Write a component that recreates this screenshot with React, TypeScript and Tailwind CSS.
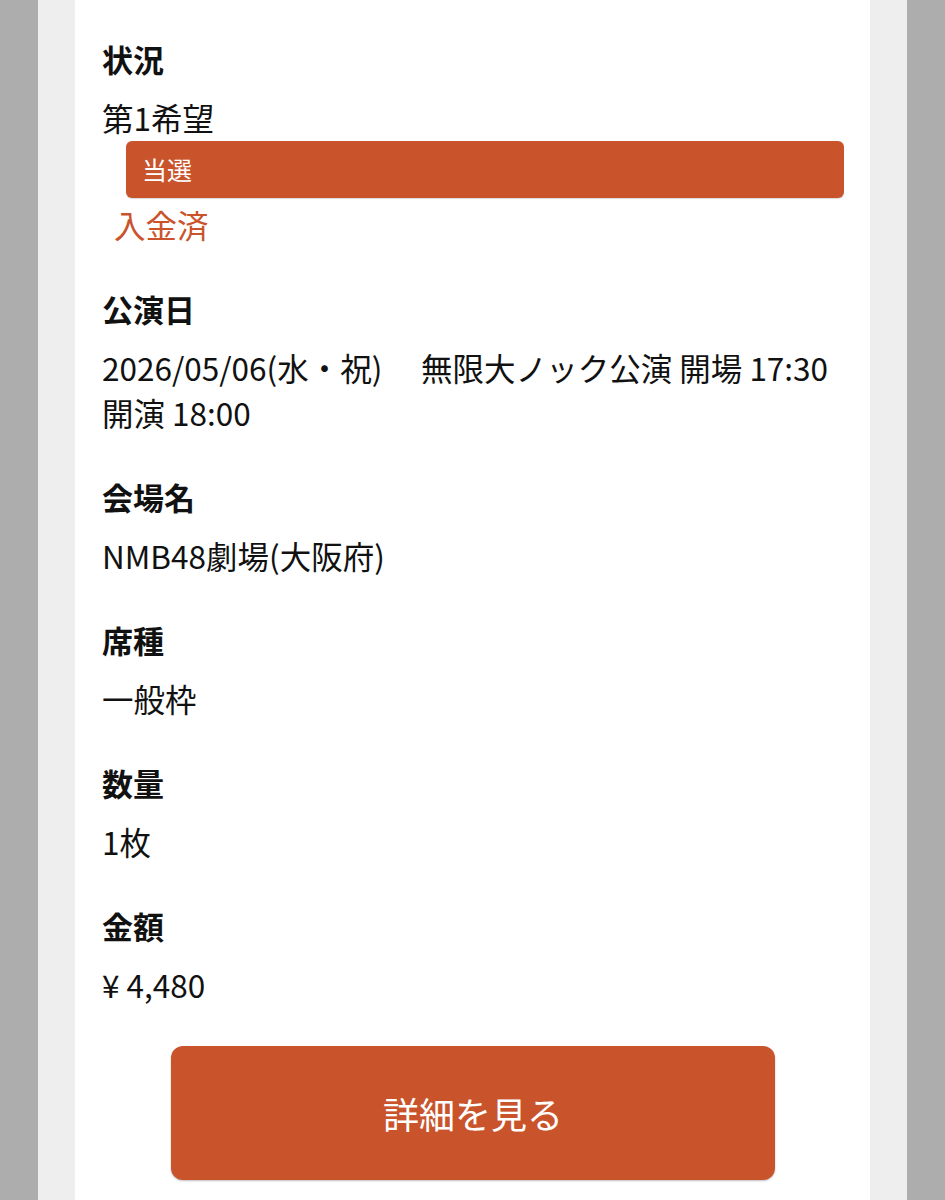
import React from "react";

const orange = "bg-[#c9542c]";

const Field = ({ label, children }: { label: string; children: React.ReactNode }) => (
  <div className="flex flex-col">
    <div className="text-[31px] leading-[45px] font-bold text-[#111]">{label}</div>
    <div className="mt-[14px] text-[31.5px] leading-[45px] text-[#111]">{children}</div>
  </div>
);

const App = () => {
  return (
    <div
      className="min-h-[1200px] flex bg-[#adadad] px-[38px]"
      style={{ fontFamily: '"Noto Sans CJK JP", "Noto Sans", sans-serif' }}
    >
      <div className="flex-1 flex bg-[#eeeeee] px-[37px]">
        <div className="flex-1 bg-white pl-[27px] pr-[26px] pt-[36px] pb-[20px]">
          <div className="flex flex-col gap-[39px]">
            <div className="flex flex-col">
              <div className="text-[31px] leading-[45px] font-bold text-[#111]">状況</div>
              <div className="mt-[14px] text-[31.5px] leading-[45px] text-[#111]">第1希望</div>
              <div
                className={`mt-[1px] ml-[24px] h-[57px] rounded-[6px] ${orange} flex items-center pl-[16px] text-white text-[25px] shadow-[0_1px_1px_rgba(0,0,0,0.15)]`}
              >
                当選
              </div>
              <div className="mt-[4px] ml-[12px] text-[31.5px] leading-[45px] text-[#c9542c]">入金済</div>
            </div>

            <Field label="公演日">
              <span className="whitespace-pre-wrap break-keep">2026/05/06(水・祝)　 無限大ノック公演 開場 17:30 開演 18:00</span>
            </Field>

            <Field label="会場名">NMB48劇場(大阪府)</Field>

            <Field label="席種">一般枠</Field>

            <Field label="数量">1枚</Field>

            <Field label="金額">¥ 4,480</Field>
          </div>

          <div className="mt-[39px] flex justify-center">
            <button
              className={`w-[604px] h-[134px] rounded-[12px] ${orange} text-white text-[36px] shadow-[0_1px_2px_rgba(0,0,0,0.25)]`}
            >
              詳細を見る
            </button>
          </div>
        </div>
      </div>
    </div>
  );
};

export default App;
